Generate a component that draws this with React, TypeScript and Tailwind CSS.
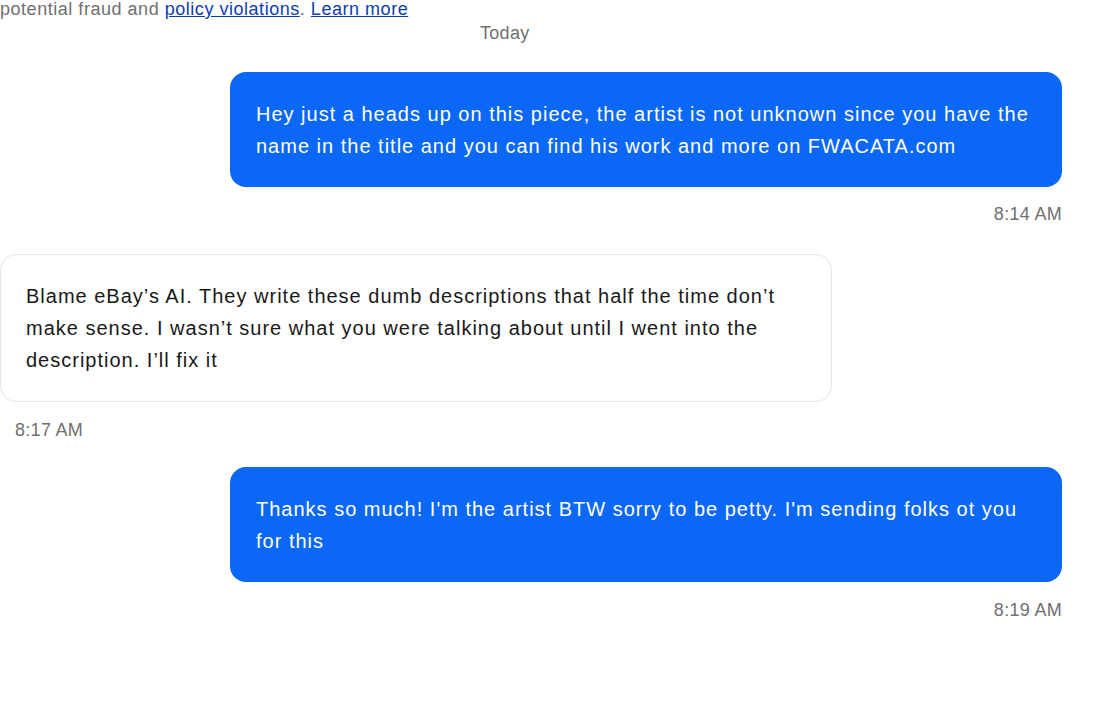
export default function App() {
  return (
    <div className="min-h-screen bg-white text-[#191919]" style={{ fontFamily: '"Liberation Sans", Arial, sans-serif' }}>
      <div className="w-[1062px]">
        <p className="text-[18px] leading-[18px] tracking-[0.53px] text-[#707070] whitespace-nowrap">
          potential fraud and <a href="#" className="text-[#0b3ead] underline">policy violations</a>.{' '}
          <a href="#" className="text-[#0b3ead] underline">Learn more</a>
        </p>
        <div className="mt-[6px] pl-[480px] text-[18px] leading-[18px] tracking-[0.3px] text-[#707070]">Today</div>

        <div className="mt-[30px] flex flex-col items-end">
          <div className="w-[832px] rounded-[16px] bg-[#0b67f5] pl-[26px] pr-[26px] pt-[26px] pb-[25px] text-[20px] leading-[32px] tracking-[1px] text-white">
            Hey just a heads up on this piece, the artist is not unknown since you have the name in the title and you can find his work and more on FWACATA.com
          </div>
          <div className="mt-[18px] text-[18px] leading-[18px] tracking-[0.3px] text-[#707070]">8:14 AM</div>
        </div>

        <div className="mt-[31px] flex flex-col items-start">
          <div className="w-[832px] rounded-[16px] border border-[#e5e5e5] bg-white px-[25px] pt-[25px] pb-[25px] text-[20px] leading-[32px] tracking-[1px] text-[#191919]">
            Blame eBay’s AI. They write these dumb descriptions that half the time don’t make sense. I wasn’t sure what you were talking about until I went into the description. I’ll fix it
          </div>
          <div className="mt-[19px] pl-[15px] text-[18px] leading-[18px] tracking-[0.3px] text-[#707070]">8:17 AM</div>
        </div>

        <div className="mt-[28px] flex flex-col items-end">
          <div className="w-[832px] rounded-[16px] bg-[#0b67f5] pl-[26px] pr-[26px] pt-[26px] pb-[25px] text-[20px] leading-[32px] tracking-[1px] text-white">
            Thanks so much! I'm the artist BTW sorry to be petty. I'm sending folks ot you for this
          </div>
          <div className="mt-[19px] text-[18px] leading-[18px] tracking-[0.3px] text-[#707070]">8:19 AM</div>
        </div>
      </div>
    </div>
  )
}
